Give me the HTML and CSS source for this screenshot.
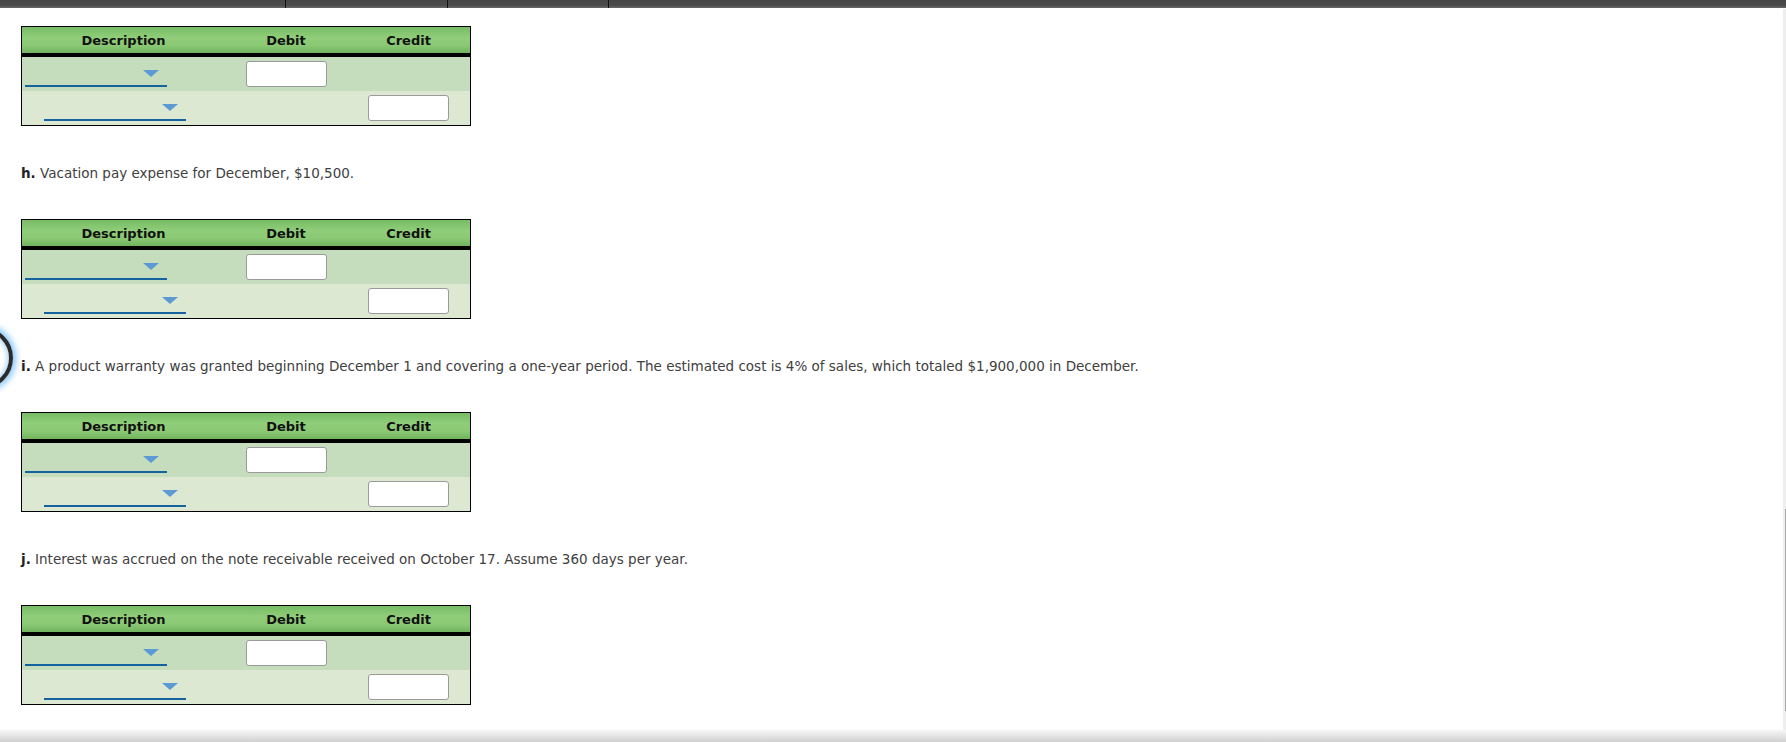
FILE: index.html
```html
<!DOCTYPE html>
<html>
<head>
<meta charset="utf-8">
<link rel="stylesheet" href="styles.css">
</head>
<body>
<div class="app">
  <div class="topbar">
    <span class="seg"></span><span class="seg"></span><span class="seg"></span><span class="seg last"></span>
  </div>
  <div class="middle">
    <main class="content">
      <div class="jtable">
        <div class="jhead"><span>Description</span><span>Debit</span><span>Credit</span></div>
        <div class="jrow r1"><div class="dd"></div><div class="amt"></div><div></div></div>
        <div class="jrow r2"><div class="dd indent"></div><div></div><div class="amt"></div></div>
      </div>
      <p class="q"><b>h.</b> Vacation pay expense for December, $10,500.</p>
      <div class="jtable">
        <div class="jhead"><span>Description</span><span>Debit</span><span>Credit</span></div>
        <div class="jrow r1"><div class="dd"></div><div class="amt"></div><div></div></div>
        <div class="jrow r2"><div class="dd indent"></div><div></div><div class="amt"></div></div>
      </div>
      <p class="q focused"><span class="ring"></span><b>i.</b> A product warranty was granted beginning December 1 and covering a one-year period. The estimated cost is 4% of sales, which totaled $1,900,000 in December.</p>
      <div class="jtable">
        <div class="jhead"><span>Description</span><span>Debit</span><span>Credit</span></div>
        <div class="jrow r1"><div class="dd"></div><div class="amt"></div><div></div></div>
        <div class="jrow r2"><div class="dd indent"></div><div></div><div class="amt"></div></div>
      </div>
      <p class="q"><b>j.</b> Interest was accrued on the note receivable received on October 17. Assume 360 days per year.</p>
      <div class="jtable">
        <div class="jhead"><span>Description</span><span>Debit</span><span>Credit</span></div>
        <div class="jrow r1"><div class="dd"></div><div class="amt"></div><div></div></div>
        <div class="jrow r2"><div class="dd indent"></div><div></div><div class="amt"></div></div>
      </div>
    </main>
    <div class="track"><div class="thumb"></div></div>
  </div>
  <div class="shade"></div>
</div>
</body>
</html>
```
FILE: styles.css
```css
html, body {
  margin: 0;
  padding: 0;
  background: #fff;
}
.app {
  display: flex;
  flex-direction: column;
  height: 742px;
  overflow: hidden;
  font-family: "DejaVu Sans", Verdana, sans-serif;
}
.topbar {
  height: 8px;
  flex: none;
  display: grid;
  grid-template-columns: 286px 162px 161px 1fr;
  background: linear-gradient(to bottom, #454545 0%, #4c4c4c 70%, #6a6a6a 100%);
}
.seg {
  border-right: 1px solid #111;
}
.seg.last {
  border-right: none;
}
.middle {
  flex: 1;
  display: flex;
  min-height: 0;
}
.content {
  flex: 1;
  padding: 18px 0 0 21px;
  overflow: hidden;
}
.track {
  width: 3px;
  flex: none;
  margin-top: 1px;
  background: #eeeeee;
  display: flex;
  flex-direction: column;
  align-items: flex-end;
}
.thumb {
  margin-top: 500px;
  width: 1px;
  height: 202px;
  background: #a8a8a8;
}
.shade {
  height: 12px;
  flex: none;
  background: linear-gradient(to bottom, #f6f6f6 0%, #e4e4e4 50%, #d0d0d0 100%);
}
.jtable {
  width: 448px;
  border: 1px solid #000;
}
.jhead {
  height: 26px;
  border-bottom: 4px solid #000;
  display: grid;
  grid-template-columns: 203px 122px 123px;
  align-items: center;
  text-align: center;
  font-size: 13px;
  font-weight: bold;
  color: #111;
  background: linear-gradient(to bottom, #78bc65 0%, #8fcd79 40%, #8bc975 70%, #71b35d 100%);
}
.jrow {
  height: 34px;
  display: grid;
  grid-template-columns: 203px 122px 123px;
  align-items: start;
}
.r1 { background: #c5ddbd; }
.r2 { background: #dde8d2; }
.dd {
  position: relative;
  width: 142px;
  height: 28px;
  margin-left: 3px;
  border-bottom: 2px solid #15629f;
}
.dd.indent {
  margin-left: 22px;
}
.dd::after {
  content: "";
  position: absolute;
  right: 8px;
  top: 13px;
  border-left: 8px solid transparent;
  border-right: 8px solid transparent;
  border-top: 7px solid #5b9ad4;
}
.amt {
  justify-self: center;
  margin-top: 4px;
  width: 81px;
  height: 26px;
  box-sizing: border-box;
  border: 1px solid #9a9a9a;
  border-radius: 3px;
  background: #fff;
}
.q {
  margin: 37px 0 36px;
  font-size: 13.5px;
  line-height: 20px;
  color: #404040;
}
.q b {
  color: #222;
}
.focused {
  position: relative;
}
.ring {
  position: absolute;
  left: -70px;
  top: -29px;
  width: 54px;
  height: 54px;
  border: 4px solid #2b2b2b;
  border-radius: 50%;
  box-shadow: 0 0 6px 3px rgba(90, 180, 250, 0.75), inset 0 0 4px 2px rgba(90, 180, 250, 0.5);
}
```
